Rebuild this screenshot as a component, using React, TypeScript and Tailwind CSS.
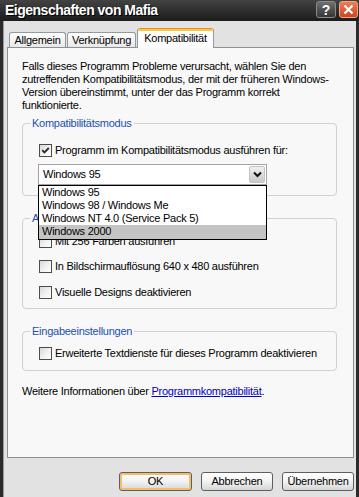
import React from 'react';

const ui: React.CSSProperties = { fontFamily: '"Liberation Sans", Arial, sans-serif' };

function Check({ checked }: { checked?: boolean }) {
  return (
    <span className="w-[13px] h-[13px] shrink-0 border border-[#4c4c4c] bg-gradient-to-br from-[#d8d8d8] via-[#f0f0f0] to-white flex items-center justify-center">
      {checked && (
        <svg width="11" height="11" viewBox="0 0 11 11">
          <path d="M2.2 5.2 L4.4 7.4 L8.8 3" stroke="#2a2a2a" strokeWidth="1.8" fill="none" />
        </svg>
      )}
    </span>
  );
}

function CheckRow({ label, checked, className }: { label: string; checked?: boolean; className?: string }) {
  return (
    <div className={`flex items-center gap-[3px] ml-[16px] h-[13px] ${className ?? ''}`}>
      <Check checked={checked} />
      <span className="leading-[13px]">{label}</span>
    </div>
  );
}

function Group({ title, className, children }: { title: string; className?: string; children: React.ReactNode }) {
  return (
    <fieldset className={`border border-[#d0d0cc] rounded-[4px] ${className ?? ''}`}>
      <legend className="ml-[7px] px-[2px] leading-[13px] text-[#1c4eb4]">{title}</legend>
      {children}
    </fieldset>
  );
}

function Tab({ label, active, className }: { label: string; active?: boolean; className?: string }) {
  if (active) {
    return (
      <div className={`relative z-10 h-[20px] -mb-px flex flex-col bg-[#fcfcfc] border-x border-[#919b9c] rounded-t-[3px] overflow-hidden ${className ?? ''}`}>
        <div className="h-[1px] bg-[#e68b2c]" />
        <div className="h-[2px] bg-[#ffc73c]" />
        <div className="flex-1 flex items-start justify-center pt-[1px] leading-[13px]">{label}</div>
      </div>
    );
  }
  return (
    <div className={`h-[15px] flex items-center justify-center leading-[13px] border-t border-x border-[#919b9c] rounded-t-[3px] bg-gradient-to-b from-white to-[#e8e8e8] ${className ?? ''}`}>
      {label}
    </div>
  );
}

function Button({ label, primary }: { label: string; primary?: boolean }) {
  return (
    <div
      className={`h-[19px] flex items-center justify-center rounded-[3px] border border-[#5e5e5e] bg-gradient-to-b from-white via-[#f2f2f2] to-[#d6d6d6] ${
        primary ? 'w-[73px] shadow-[inset_0_0_0_2px_#f4bd6a]' : 'w-[72px]'
      }`}
    >
      {label}
    </div>
  );
}

export default function App() {
  return (
    <div className="w-[359px] h-[497px] overflow-hidden bg-[#2b2b2b] flex flex-col text-[11px] tracking-[-0.25px] text-black" style={ui}>
      {/* title bar */}
      <div className="h-[21px] shrink-0 flex items-start bg-gradient-to-b from-[#434343] to-[#1c1c1c]">
        <span className="ml-[5px] mt-[1px] text-[14px] tracking-[-0.5px] font-bold text-white leading-[18px] [text-shadow:1px_1px_0_#000]">
          Eigenschaften von Mafia
        </span>
        <div className="ml-auto mt-[1px] mr-[1px] flex gap-[3px]">
          <div className="w-[20px] h-[17px] rounded-[3px] border border-[#8c8c8c] bg-gradient-to-b from-[#707070] to-[#363636] flex items-center justify-center text-white font-bold text-[14px] leading-none">
            ?
          </div>
          <div className="w-[19px] h-[17px] rounded-[3px] border border-[#f2a585] bg-gradient-to-b from-[#ec7e55] to-[#cc4420] flex items-center justify-center">
            <svg width="11" height="11" viewBox="0 0 11 11">
              <path d="M1.5 1.5 L9.5 9.5 M9.5 1.5 L1.5 9.5" stroke="white" strokeWidth="2.2" />
            </svg>
          </div>
        </div>
      </div>

      {/* body */}
      <div className="flex-1 ml-[3px] mr-[3px] bg-[#e2e2e2] border-l border-[#9a9a9a] pl-[3px] pr-[2px] flex flex-col">
        <div className="h-[26px] shrink-0 flex items-end">
          <Tab label="Allgemein" className="ml-[2px] w-[57px]" />
          <Tab label="Verknüpfung" className="ml-[1px] w-[69px]" />
          <Tab label="Kompatibilität" active className="ml-[1px] w-[77px]" />
        </div>

        <div className="h-[411px] shrink-0 border border-[#8f8f8f] bg-[#f8f8f8] pl-[14px] pr-[16px] flex flex-col">
          <p className="pt-[12px] leading-[13px]">
            Falls dieses Programm Probleme verursacht, wählen Sie den
            <br />
            zutreffenden Kompatibilitätsmodus, der mit der früheren Windows-
            <br />
            Version übereinstimmt, unter der das Programm korrekt
            <br />
            funktionierte.
          </p>

          <Group title="Kompatibilitätsmodus" className="mt-[5px] pb-[10px]">
            <CheckRow label="Programm im Kompatibilitätsmodus ausführen für:" checked className="mt-[14px]" />
            <div className="relative mt-[7px] ml-[15px] w-[229px] h-[21px] border border-[#a3a3a3] bg-white flex items-center">
              <span className="pl-[4px] leading-[13px]">Windows 95</span>
              <div className="ml-auto mr-[1px] w-[16px] h-[17px] rounded-[2px] border border-[#c4c4c4] bg-gradient-to-b from-[#f0f0f0] to-[#c9c9c9] flex items-center justify-center">
                <svg width="9" height="7" viewBox="0 0 9 7">
                  <path d="M1 1.5 L4.5 5 L8 1.5" stroke="#111" strokeWidth="2" fill="none" />
                </svg>
              </div>
              <div className="absolute left-[-1px] top-[20px] w-[229px] border border-black bg-white z-20">
                <div className="h-[13px] leading-[13px] pl-[3px]">Windows 95</div>
                <div className="h-[13px] leading-[13px] pl-[3px]">Windows 98 / Windows Me</div>
                <div className="h-[13px] leading-[13px] pl-[3px]">Windows NT 4.0 (Service Pack 5)</div>
                <div className="h-[14px] leading-[13px] pl-[3px] bg-[#c4c4c4]">Windows 2000</div>
              </div>
            </div>
          </Group>

          <Group title="Anzeigeeinstellungen" className="mt-[16px] pb-[9px]">
            <CheckRow label="Mit 256 Farben ausführen" className="mt-[10px]" />
            <CheckRow label="In Bildschirmauflösung 640 x 480 ausführen" className="mt-[12px]" />
            <CheckRow label="Visuelle Designs deaktivieren" className="mt-[13px]" />
          </Group>

          <Group title="Eingabeeinstellungen" className="mt-[16px] pb-[10px]">
            <CheckRow label="Erweiterte Textdienste für dieses Programm deaktivieren" className="mt-[9px]" />
          </Group>

          <p className="mt-[14px] leading-[13px]">
            Weitere Informationen über{' '}
            <span className="text-[#0000c8] underline">Programmkompatibilität</span>.
          </p>
        </div>

        <div className="mt-[14px] flex justify-end gap-[9px]">
          <Button label="OK" primary />
          <Button label="Abbrechen" />
          <Button label="Übernehmen" />
        </div>
      </div>
    </div>
  );
}
